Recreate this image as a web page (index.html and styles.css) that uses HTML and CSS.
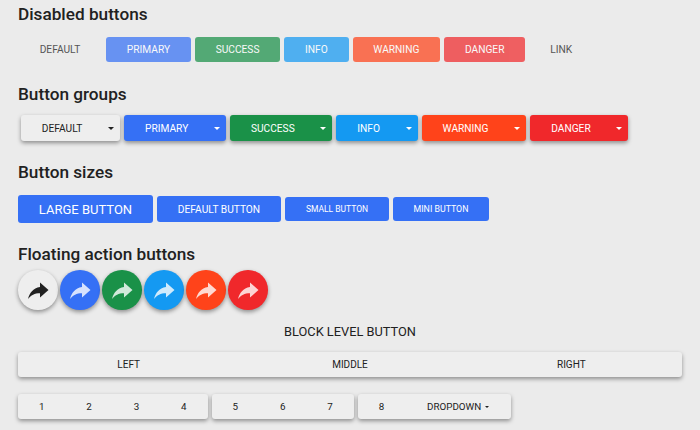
FILE: index.html
```html
<!DOCTYPE html>
<html lang="en">

<head>
    <meta charset="UTF-8">
    <meta name="viewport" content="width=device-width, initial-scale=1.0">
    <link rel="stylesheet" href="styles.css">
    <title>Buttons</title>
</head>

<body>
    <svg class="icon-defs" width="0" height="0">
        <symbol id="share" viewBox="0 0 24 24">
            <path d="M14 4.500V9C7 10 3.600 15 2 21c3-4 6.500-5.800 12-5.800v4.300l8.500-7.500z" />
        </symbol>
    </svg>

    <h2>Disabled buttons</h2>
    <div class="row row-disabled">
        <span class="btn flat default-text">Default</span>
        <span class="btn primary">Primary</span>
        <span class="btn success">Success</span>
        <span class="btn info">Info</span>
        <span class="btn warning">Warning</span>
        <span class="btn danger">Danger</span>
        <span class="btn flat default-text">Link</span>
    </div>

    <h2>Button groups</h2>
    <div class="row row-groups">
        <span class="btn raised default">Default<i class="caret"></i></span>
        <span class="btn raised primary">Primary<i class="caret"></i></span>
        <span class="btn raised success">Success<i class="caret"></i></span>
        <span class="btn raised info">Info<i class="caret"></i></span>
        <span class="btn raised warning">Warning<i class="caret"></i></span>
        <span class="btn raised danger">Danger<i class="caret"></i></span>
    </div>

    <h2>Button sizes</h2>
    <div class="row row-sizes">
        <span class="btn primary lg">Large button</span>
        <span class="btn primary md">Default button</span>
        <span class="btn primary sm">Small button</span>
        <span class="btn primary xs">Mini button</span>
    </div>

    <h2>Floating action buttons</h2>
    <div class="row row-fabs">
        <span class="fab default"><svg><use href="#share" /></svg></span>
        <span class="fab primary"><svg><use href="#share" /></svg></span>
        <span class="fab success"><svg><use href="#share" /></svg></span>
        <span class="fab info"><svg><use href="#share" /></svg></span>
        <span class="fab warning"><svg><use href="#share" /></svg></span>
        <span class="fab danger"><svg><use href="#share" /></svg></span>
    </div>

    <div class="block-title">Block level button</div>
    <div class="justified">
        <span>Left</span>
        <span>Middle</span>
        <span>Right</span>
    </div>

    <div class="row row-toolbar">
        <div class="toolbar-group">
            <span>1</span><span>2</span><span>3</span><span>4</span>
        </div>
        <div class="toolbar-group">
            <span>5</span><span>6</span><span>7</span>
        </div>
        <div class="toolbar-group">
            <span>8</span><span class="toolbar-menu">Dropdown<i class="caret"></i></span>
        </div>
    </div>
</body>

</html>
```

FILE: styles.css
```css
body {
    font-family: 'Roboto', sans-serif;
    margin: 0;
    padding: 0 18px;
    height: 430px;
    overflow: hidden;
    box-sizing: border-box;
    background-color: #ebebeb;
    color: #212121;
}

.icon-defs {
    position: absolute;
}

h2 {
    font-size: 17.2px;
    font-weight: 500;
    line-height: 20px;
    margin: 0;
    padding-top: 4px;
}

.row {
    display: flex;
    gap: 4px;
}

.row-disabled {
    margin-top: 13px;
    margin-bottom: 18px;
}

.row-groups {
    margin-top: 11px;
    margin-bottom: 17px;
    padding-left: 3px;
}

.row-sizes {
    margin-top: 13px;
    margin-bottom: 17px;
    align-items: center;
}

.row-fabs {
    margin-top: 6px;
    gap: 2.5px;
}

.btn {
    display: flex;
    align-items: center;
    justify-content: center;
    box-sizing: border-box;
    height: 25px;
    padding: 0 20.8px;
    border-radius: 3px;
    font-size: 10.2px;
    text-transform: uppercase;
    color: #fff;
}

.row-disabled .btn {
    opacity: 0.72;
}

.row-disabled .flat {
    opacity: 1;
    background: none;
}

.row-disabled .default-text {
    color: #555;
}

.row-disabled .btn:first-child {
    width: 84px;
}

.row-disabled .btn:last-child {
    width: 64px;
}

.default {
    background-color: #eee;
}

.btn.default,
.fab.default {
    color: #212121;
}

.primary {
    background-color: #3570f5;
}

.success {
    background-color: #1a9148;
}

.info {
    background-color: #1499f2;
}

.warning {
    background-color: #ff431a;
}

.danger {
    background-color: #f0282b;
}

.raised {
    height: 26px;
    padding-top: 1px;
    padding-right: 6px;
    box-shadow: 0 2px 4px rgba(0, 0, 0, 0.4);
}

.caret {
    display: inline-block;
    width: 0;
    height: 0;
    border-top: 3px solid currentColor;
    border-left: 3px solid transparent;
    border-right: 3px solid transparent;
}

.raised .caret {
    margin-left: 25.8px;
}

.lg {
    height: 28px;
    width: 135px;
    padding: 0;
    font-size: 13px;
}

.md {
    height: 26px;
    width: 124px;
    padding: 0;
    font-size: 10.2px;
}

.sm {
    height: 24px;
    width: 104px;
    padding: 0;
    font-size: 8.5px;
}

.xs {
    height: 24px;
    width: 96px;
    padding: 0;
    font-size: 8.8px;
}

.fab {
    display: flex;
    align-items: center;
    justify-content: center;
    width: 39.5px;
    height: 39.5px;
    border-radius: 50%;
    color: #fff;
    box-shadow: 0 2px 4px rgba(0, 0, 0, 0.4);
}

.fab svg {
    width: 24px;
    height: 24px;
    fill: currentColor;
    opacity: 0.8;
}

.fab.default svg {
    opacity: 1;
}

.block-title {
    margin-top: 14px;
    font-size: 12.8px;
    line-height: 16px;
    text-align: center;
    text-transform: uppercase;
}

.justified {
    display: flex;
    height: 25px;
    margin-top: 12px;
    border-radius: 3px;
    background-color: #eee;
    box-shadow: 0 2px 4px rgba(0, 0, 0, 0.4);
    font-size: 10px;
    text-transform: uppercase;
}

.justified span {
    flex: 1;
    display: flex;
    align-items: center;
    justify-content: center;
}

.row-toolbar {
    margin-top: 17px;
}

.toolbar-group {
    display: flex;
    align-items: center;
    height: 25px;
    border-radius: 3px;
    background-color: #eee;
    box-shadow: 0 2px 4px rgba(0, 0, 0, 0.4);
    font-size: 9.8px;
    text-transform: uppercase;
}

.toolbar-group span {
    width: 47.4px;
    text-align: center;
}

.toolbar-group .toolbar-menu {
    width: 106px;
}

.toolbar-menu .caret {
    margin-left: 4px;
    vertical-align: middle;
    border-top-width: 2.5px;
    border-left-width: 2.5px;
    border-right-width: 2.5px;
}
```
